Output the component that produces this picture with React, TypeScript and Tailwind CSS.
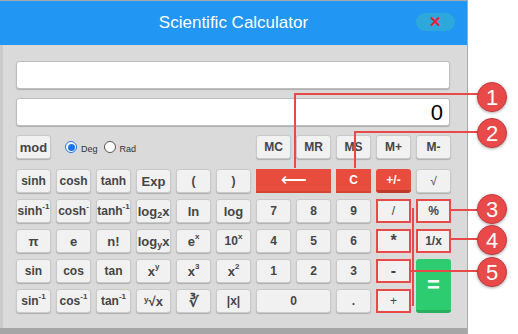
import React from "react";

type Btn = {
  label: React.ReactNode;
  kind?: "red" | "redRound" | "green" | "mark";
  span?: string;
  cls?: string;
};

const sup = (s: string) => <span className="relative -top-[4px] text-[8px]">{s}</span>;

const base =
  "h-6 flex items-center justify-center text-[12px] font-bold leading-none select-none";
const normal =
  "rounded-[3px] border border-[#c9c9c9] bg-[#f1f1f1] text-[#454545] shadow-[0_1px_1px_rgba(0,0,0,0.2)]";

function Key({ b }: { b: Btn }) {
  let look = normal;
  if (b.kind === "red") look = "bg-[#e74c3c] text-white border-b-2 border-[#d34434]";
  if (b.kind === "redRound")
    look = "rounded-[3px] bg-[#e74c3c] text-white border-b-[3px] border-[#c0392b]";
  if (b.kind === "green")
    look = "h-auto rounded-[3px] bg-[#2ecc71] text-white text-[22px] border-b-[3px] border-[#27ae60]";
  if (b.kind === "mark") look = "border-2 border-[#e84a4a] bg-[#f1f1f1] text-[#454545]";
  return <div className={`${base} ${look} ${b.span ?? ""} ${b.cls ?? ""}`}>{b.label}</div>;
}

const rows: Btn[] = [
  { label: "sinh" },
  { label: "cosh" },
  { label: "tanh" },
  { label: "Exp", cls: "text-[13px]" },
  { label: "(" },
  { label: ")" },
  { label: <span className="text-[18px] font-normal">⟵</span>, kind: "red", span: "col-span-2" },
  { label: "C", kind: "red" },
  { label: "+/-", kind: "redRound", cls: "text-[11px]" },
  { label: "√", cls: "text-[#8a8a8a] font-normal" },

  { label: <>sinh{sup("-1")}</> },
  { label: <>cosh{sup("-")}</> },
  { label: <>tanh{sup("-1")}</> },
  { label: <span className="text-[13px]">log<sub className="text-[9px]">2</sub>x</span> },
  { label: "ln", cls: "text-[13px]" },
  { label: "log", cls: "text-[13px]" },
  { label: "7" },
  { label: "8" },
  { label: "9" },
  { label: "/", kind: "mark", cls: "font-normal" },
  { label: "%", kind: "mark" },

  { label: "π", cls: "text-[13px]" },
  { label: "e", cls: "text-[13px]" },
  { label: "n!", cls: "text-[13px]" },
  { label: <span className="text-[13px]">log<sub className="text-[9px]">y</sub>x</span> },
  { label: <>e{sup("x")}</>, cls: "text-[13px]" },
  { label: <>10{sup("x")}</> },
  { label: "4" },
  { label: "5" },
  { label: "6" },
  { label: "*", kind: "mark", cls: "text-[16px]" },
  { label: "1/x", kind: "mark" },

  { label: "sin" },
  { label: "cos" },
  { label: "tan" },
  { label: <>x{sup("y")}</>, cls: "text-[13px]" },
  { label: <>x{sup("3")}</>, cls: "text-[13px]" },
  { label: <>x{sup("2")}</>, cls: "text-[13px]" },
  { label: "1" },
  { label: "2" },
  { label: "3" },
  { label: "-", kind: "mark", cls: "text-[16px]" },
  { label: "=", kind: "green", span: "row-span-2" },

  { label: <>sin{sup("-1")}</> },
  { label: <>cos{sup("-1")}</> },
  { label: <>tan{sup("-1")}</> },
  { label: <span className="text-[13px]">{sup("y")}√x</span> },
  { label: <span className="text-[15px]">∛</span> },
  { label: "|x|" },
  { label: "0", span: "col-span-2" },
  { label: "." },
  { label: "+", kind: "mark", cls: "font-normal" },
];

const memory = ["MC", "MR", "MS", "M+", "M-"];

function Callout({ n, top }: { n: number; top: number }) {
  return (
    <div
      className="absolute left-[477px] w-[30px] h-[30px] rounded-full bg-[#e84a4a] border border-[#c9383a] shadow-[0_1px_3px_rgba(0,0,0,0.35)] flex items-center justify-center text-white text-[22px]"
      style={{ top }}
    >
      {n}
    </div>
  );
}

export default function App() {
  return (
    <div className="relative w-[518px] h-[334px] overflow-hidden bg-white font-['Liberation_Sans',Arial,sans-serif]">
      <div className="w-[468px] h-full border-t border-r border-[#aaaaaa] flex flex-col">
        <div className="h-[44px] bg-[#2196f3] flex items-center justify-center relative shrink-0">
          <span className="text-white text-[17px]">Scientific Calculator</span>
          <div className="absolute left-[416px] top-[12px] w-[39px] h-[18px] rounded-full bg-[#2ea8dc] flex items-center justify-center text-[#e2253c] text-[15px] font-bold">
            ✕
          </div>
        </div>
        <div className="flex-1 bg-[#dadada] border-l-[3px] border-[#cbcbcb] pl-[13px] pt-[16px] flex flex-col">
          <div className="w-[434px] h-[28px] bg-white border border-[#bdbdbd] rounded-[3px] shadow-[0_1px_1px_rgba(0,0,0,0.2)]" />
          <div className="mt-[9px] w-[434px] h-[28px] bg-white border border-[#bdbdbd] rounded-[3px] shadow-[0_1px_1px_rgba(0,0,0,0.2)] flex items-center justify-end pr-[6px] text-[22px] text-black">
            0
          </div>
          <div className="mt-[9px] grid grid-cols-[repeat(11,35px)] gap-x-[5px]">
            <Key b={{ label: "mod", cls: "text-[13px]" }} />
            <div className="col-span-5 flex items-center gap-[4px] pl-[9px] text-[9px] text-[#333]">
              <span className="w-[12px] h-[12px] rounded-full border-[1.5px] border-[#1a73e8] flex items-center justify-center bg-white">
                <span className="w-[7px] h-[7px] rounded-full bg-[#1a73e8]" />
              </span>
              <span className="mt-[6px]">Deg</span>
              <span className="ml-[2px] w-[12px] h-[12px] rounded-full border border-[#555] bg-white" />
              <span className="mt-[6px]">Rad</span>
            </div>
            {memory.map((m) => (
              <Key key={m} b={{ label: m }} />
            ))}
          </div>
          <div className="mt-[10px] grid grid-cols-[repeat(11,35px)] grid-rows-[repeat(5,24px)] gap-x-[5px] gap-y-[6px]">
            {rows.map((b, i) => (
              <Key key={i} b={b} />
            ))}
          </div>
        </div>
        <div className="h-[6px] bg-[#a6a6a6] shrink-0" />
      </div>

      <svg className="absolute inset-0 pointer-events-none" width="518" height="334">
        <g stroke="#e84a4a" strokeWidth="2" fill="none">
          <polyline points="295,168 295,94 480,94" />
          <polyline points="355,168 355,132 480,132" />
          <line x1="451" y1="210" x2="480" y2="210" />
          <line x1="451" y1="239" x2="480" y2="239" />
          <line x1="413" y1="208" x2="413" y2="306" />
          <line x1="411" y1="271" x2="480" y2="271" />
        </g>
      </svg>
      <Callout n={1} top={82} />
      <Callout n={2} top={118} />
      <Callout n={3} top={194} />
      <Callout n={4} top={225} />
      <Callout n={5} top={257} />
    </div>
  );
}
